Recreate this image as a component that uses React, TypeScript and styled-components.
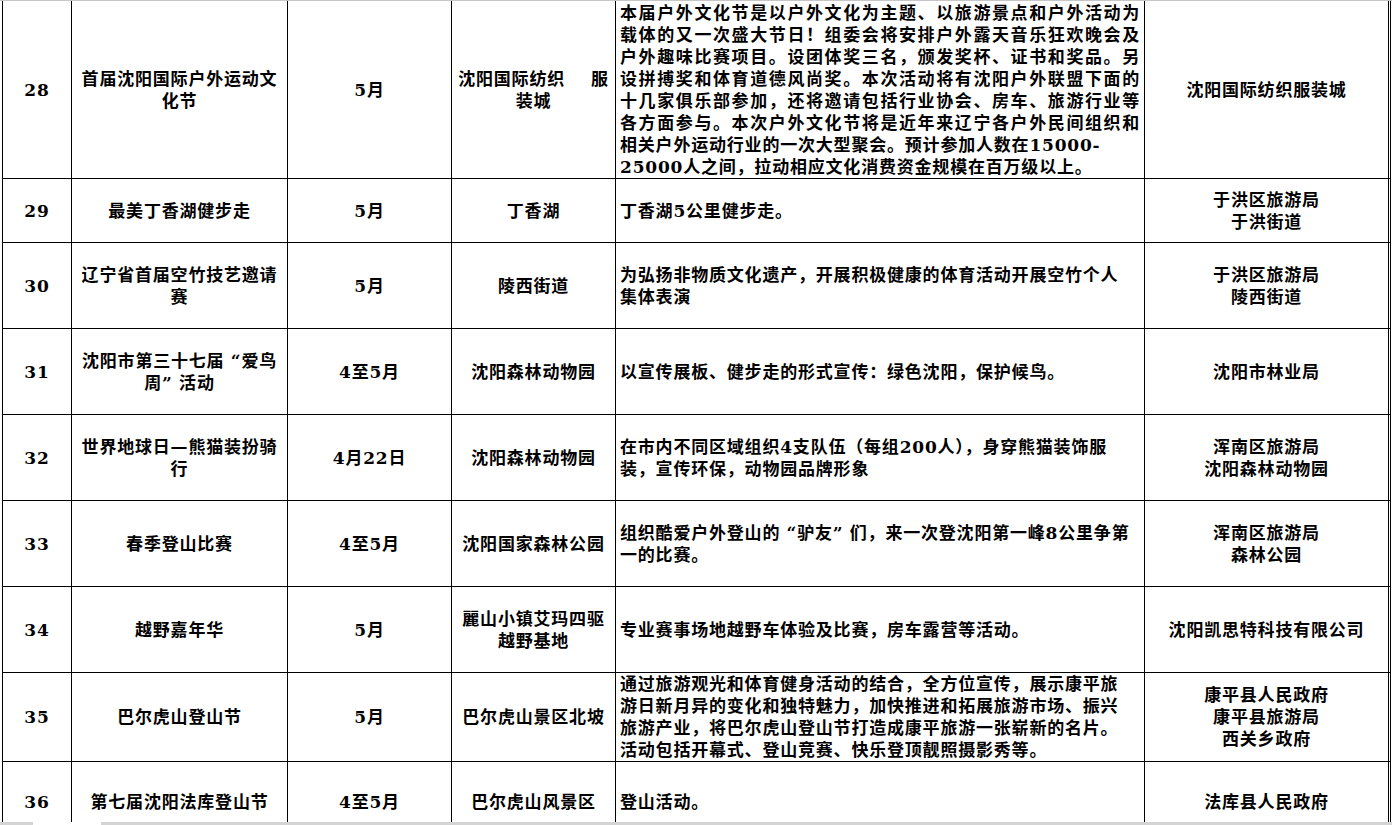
import React from 'react';
import styled, { createGlobalStyle } from 'styled-components';

const GlobalStyle = createGlobalStyle`
  html, body {
    margin: 0;
    padding: 0;
    background: #fff;
  }
  body {
    font-family: "DejaVu Serif", "Noto Sans CJK SC", serif;
    color: #000;
  }
`;

const Page = styled.div`
  width: 1392px;
  height: 825px;
  box-sizing: border-box;
  border-top: 1px solid #c6c6c6;
  display: flex;
  flex-direction: column;
  overflow: hidden;
  background: #fff;
`;

const Sheet = styled.div`
  flex: 1;
  overflow: hidden;
  padding-left: 2px;
`;

const Row = styled.div<{ $h: number }>`
  display: grid;
  grid-template-columns: 69px 216px 164px 164px 529px 246px;
  height: ${(p) => p.$h}px;
  border-left: 1px solid #000;
`;

const Cell = styled.div<{ $left?: boolean }>`
  box-sizing: border-box;
  border-right: 1px solid #000;
  border-bottom: 1px solid #000;
  display: flex;
  flex-direction: column;
  justify-content: center;
  align-items: ${(p) => (p.$left ? 'stretch' : 'center')};
  text-align: ${(p) => (p.$left ? 'left' : 'center')};
  padding: 0 4px;
  font-size: 17px;
  font-weight: 700;
  letter-spacing: 0.8px;
  overflow: visible;

  &:last-child {
    border-right: 3px double #000;
  }
`;

const Line = styled.div<{ $spread?: boolean }>`
  white-space: nowrap;
  line-height: 22px;
  ${(p) => (p.$spread ? 'text-align: justify; text-align-last: justify;' : '')}
`;

const Gap = styled.span`
  display: inline-block;
  width: 26px;
`;

// full-width curly quote, as the sheet's song font draws it
const Quote = styled.span<{ $close?: boolean }>`
  display: inline-block;
  width: 17px;
  text-align: ${(p) => (p.$close ? 'left' : 'right')};
  letter-spacing: 0.8px;
`;

const Bar = styled.div`
  height: 3px;
  flex-shrink: 0;
  background: #d4d4d4;
  display: flex;
`;

const Thumb = styled.div`
  margin-left: 33px;
  width: 68px;
  background: #fff;
`;

type Item = {
  no: string;
  name: React.ReactNode[];
  time: string;
  place: React.ReactNode[];
  desc: React.ReactNode[];
  org: string[];
  h: number;
  spread?: number;
};

const rows: Item[] = [
  {
    no: '28',
    name: ['首届沈阳国际户外运动文', '化节'],
    time: '5月',
    place: [
      <>
        沈阳国际纺织
        <Gap />服
      </>,
      '装城',
    ],
    desc: [
      '本届户外文化节是以户外文化为主题、以旅游景点和户外活动为',
      '载体的又一次盛大节日！组委会将安排户外露天音乐狂欢晚会及',
      '户外趣味比赛项目。设团体奖三名，颁发奖杯、证书和奖品。另',
      '设拼搏奖和体育道德风尚奖。本次活动将有沈阳户外联盟下面的',
      '十几家俱乐部参加，还将邀请包括行业协会、房车、旅游行业等',
      '各方面参与。本次户外文化节将是近年来辽宁各户外民间组织和',
      '相关户外运动行业的一次大型聚会。预计参加人数在15000-',
      '25000人之间，拉动相应文化消费资金规模在百万级以上。',
    ],
    org: ['沈阳国际纺织服装城'],
    h: 178,
    spread: 6,
  },
  {
    no: '29',
    name: ['最美丁香湖健步走'],
    time: '5月',
    place: ['丁香湖'],
    desc: ['丁香湖5公里健步走。'],
    org: ['于洪区旅游局', '于洪街道'],
    h: 64,
  },
  {
    no: '30',
    name: ['辽宁省首届空竹技艺邀请', '赛'],
    time: '5月',
    place: ['陵西街道'],
    desc: ['为弘扬非物质文化遗产，开展积极健康的体育活动开展空竹个人', '集体表演'],
    org: ['于洪区旅游局', '陵西街道'],
    h: 86,
  },
  {
    no: '31',
    name: [
      <>
        沈阳市第三十七届<Quote>“</Quote>爱鸟
      </>,
      <>
        周<Quote $close>”</Quote>活动
      </>,
    ],
    time: '4至5月',
    place: ['沈阳森林动物园'],
    desc: ['以宣传展板、健步走的形式宣传：绿色沈阳，保护候鸟。'],
    org: ['沈阳市林业局'],
    h: 86,
  },
  {
    no: '32',
    name: ['世界地球日—熊猫装扮骑', '行'],
    time: '4月22日',
    place: ['沈阳森林动物园'],
    desc: ['在市内不同区域组织4支队伍（每组200人），身穿熊猫装饰服', '装，宣传环保，动物园品牌形象'],
    org: ['浑南区旅游局', '沈阳森林动物园'],
    h: 86,
  },
  {
    no: '33',
    name: ['春季登山比赛'],
    time: '4至5月',
    place: ['沈阳国家森林公园'],
    desc: [
      <>
        组织酷爱户外登山的<Quote>“</Quote>驴友<Quote $close>”</Quote>们，来一次登沈阳第一峰8公里争第
      </>,
      '一的比赛。',
    ],
    org: ['浑南区旅游局', '森林公园'],
    h: 86,
  },
  {
    no: '34',
    name: ['越野嘉年华'],
    time: '5月',
    place: ['麗山小镇艾玛四驱', '越野基地'],
    desc: ['专业赛事场地越野车体验及比赛，房车露营等活动。'],
    org: ['沈阳凯思特科技有限公司'],
    h: 86,
  },
  {
    no: '35',
    name: ['巴尔虎山登山节'],
    time: '5月',
    place: ['巴尔虎山景区北坡'],
    desc: [
      '通过旅游观光和体育健身活动的结合，全方位宣传，展示康平旅',
      '游日新月异的变化和独特魅力，加快推进和拓展旅游市场、振兴',
      '旅游产业，将巴尔虎山登山节打造成康平旅游一张崭新的名片。',
      '活动包括开幕式、登山竞赛、快乐登顶靓照摄影秀等。',
    ],
    org: ['康平县人民政府', '康平县旅游局', '西关乡政府'],
    h: 86,
  },
  {
    no: '36',
    name: ['第七届沈阳法库登山节'],
    time: '4至5月',
    place: ['巴尔虎山风景区'],
    desc: ['登山活动。'],
    org: ['法库县人民政府'],
    h: 86,
  },
];

const Lines = ({ items }: { items: React.ReactNode[] }) => (
  <>
    {items.map((t, i) => (
      <Line key={i}>{t}</Line>
    ))}
  </>
);

const App = () => {
  return (
    <>
      <GlobalStyle />
      <Page>
        <Sheet>
          {rows.map((r) => (
            <Row key={r.no} $h={r.h}>
              <Cell>
                <Line>{r.no}</Line>
              </Cell>
              <Cell>
                <Lines items={r.name} />
              </Cell>
              <Cell>
                <Line>{r.time}</Line>
              </Cell>
              <Cell>
                <Lines items={r.place} />
              </Cell>
              <Cell $left>
                {r.desc.map((t, i) => (
                  <Line key={i} $spread={r.spread !== undefined && i < r.spread}>
                    {t}
                  </Line>
                ))}
              </Cell>
              <Cell>
                <Lines items={r.org} />
              </Cell>
            </Row>
          ))}
        </Sheet>
        <Bar>
          <Thumb />
        </Bar>
      </Page>
    </>
  );
};

export default App;
